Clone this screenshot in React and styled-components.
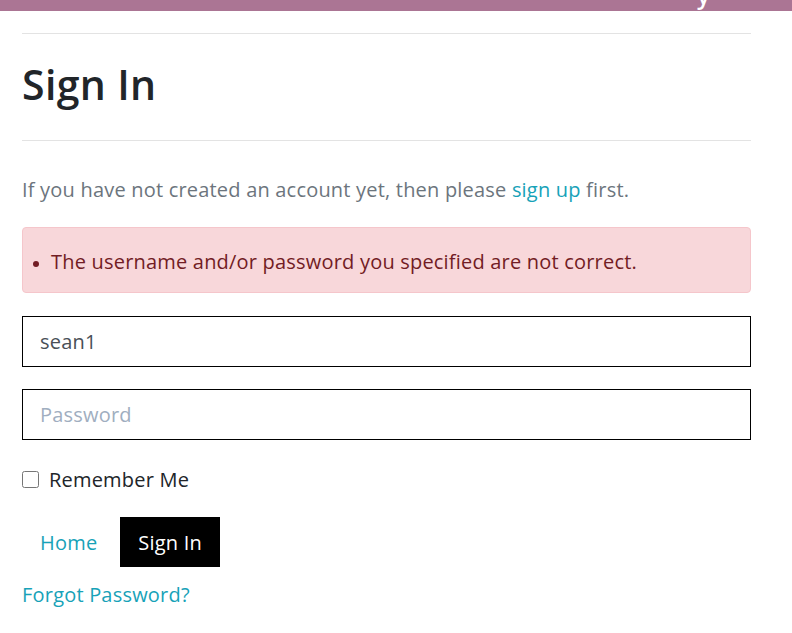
import React from 'react';
import styled, { createGlobalStyle } from 'styled-components';

const GlobalStyle = createGlobalStyle`
    body {
        margin: 0;
        background: #fff;
        font-family: "Open Sans", "Noto Sans", sans-serif;
        color: #212529;
        letter-spacing: 0.2px;
    }
`

const TopBar = styled.div`
    height: 11px;
    background: #ab7594;
    overflow: hidden;
    display: flex;
    justify-content: flex-end;
    padding-right: 82px;
`

const BarText = styled.span`
    color: #fff;
    font-size: 24px;
    line-height: 24px;
    margin-top: -17px;
    font-weight: 600;
`

const Container = styled.main`
    width: 729px;
    padding: 0 22px;
`

const Rule = styled.hr`
    border: 0;
    border-top: 1px solid #e3e3e3;
    margin: 0;
    margin-top: ${p => p.$top || 0}px;
`

const Title = styled.h1`
    font-size: 41px;
    font-weight: 600;
    line-height: 48px;
    letter-spacing: 0.35px;
    margin: 0;
    padding: 26px 0 32px;
`

const Intro = styled.p`
    font-size: 20px;
    color: #6c757d;
    margin: 34px 0 22px;
    line-height: 30px;
`

const Link = styled.a`
    color: #17a2b8;
    text-decoration: none;
`

const Alert = styled.div`
    box-sizing: border-box;
    height: 66px;
    background: #f8d7da;
    border: 1px solid #f5c6cb;
    border-radius: 4px;
    color: #721c24;
    padding: 20px 10px 0;
    font-size: 20px;
    line-height: 28px;
`

const ErrorList = styled.ul`
    margin: 0;
    padding-left: 18px;

    li::marker {
        font-size: 16px;
    }
`

const Form = styled.form`
    display: flex;
    flex-direction: column;
    margin-top: 23px;
`

const Input = styled.input`
    box-sizing: border-box;
    flex: 0 0 51px;
    height: 51px;
    border: 1px solid #000;
    padding: 0 17px;
    font-family: inherit;
    font-size: 20px;
    letter-spacing: 0.2px;
    color: #495057;
    margin: 0 0 22px;
    outline: none;

    &::placeholder {
        color: #a0aec0;
    }
`

const CheckRow = styled.label`
    display: flex;
    align-items: center;
    gap: 10px;
    font-size: 20px;
    color: #212529;
    margin: 4px 0 24px;
`

const Check = styled.input`
    width: 17px;
    height: 17px;
    margin: 0;
`

const Actions = styled.div`
    display: flex;
    gap: 5px;
`

const Button = styled.button`
    height: 50px;
    padding: 0 18px;
    border: 0;
    border-radius: 0;
    font-family: inherit;
    font-size: 20px;
    letter-spacing: 0.2px;
    cursor: pointer;
    background: ${p => p.$primary ? '#000' : 'transparent'};
    color: ${p => p.$primary ? '#fff' : '#17a2b8'};
`

const Forgot = styled(Link)`
    display: inline-block;
    font-size: 20px;
    margin-top: 14px;
`

const App = () => {
    return (
        <>
            <GlobalStyle />
            <TopBar><BarText>y</BarText></TopBar>
            <Container>
                <Rule $top={22} />
                <Title>Sign In</Title>
                <Rule />
                <Intro>
                    If you have not created an account yet, then please <Link href='#'>sign up</Link> first.
                </Intro>
                <Alert>
                    <ErrorList>
                        <li>The username and/or password you specified are not correct.</li>
                    </ErrorList>
                </Alert>
                <Form onSubmit={e => e.preventDefault()}>
                    <Input type='text' defaultValue='sean1' />
                    <Input type='password' placeholder='Password' />
                    <CheckRow><Check type='checkbox' />Remember Me</CheckRow>
                    <Actions>
                        <Button type='button'>Home</Button>
                        <Button $primary type='submit'>Sign In</Button>
                    </Actions>
                </Form>
                <Forgot href='#'>Forgot Password?</Forgot>
            </Container>
        </>
    )
}

export default App
